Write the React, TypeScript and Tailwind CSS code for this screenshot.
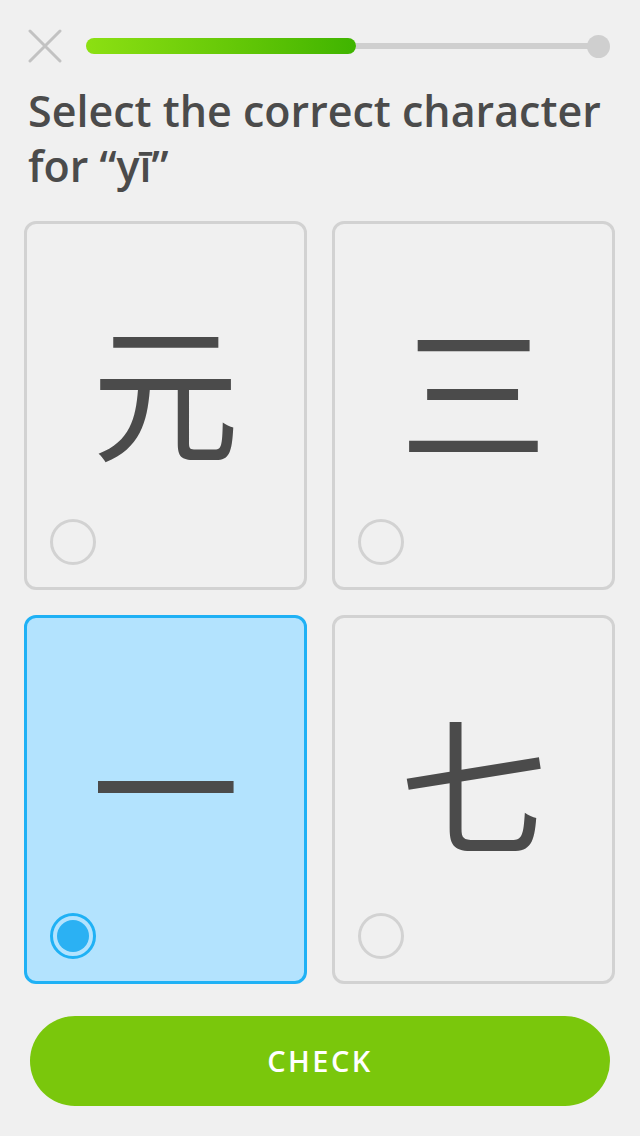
import { useState } from "react";

type Choice = { id: string; glyph: string };

const CHOICES: Choice[] = [
  { id: "yuan", glyph: "元" },
  { id: "san", glyph: "三" },
  { id: "yi", glyph: "一" },
  { id: "qi", glyph: "七" },
];

function CloseIcon() {
  return (
    <svg width="34" height="34" viewBox="0 0 34 34" className="shrink-0">
      <path
        d="M2 2 L32 32 M32 2 L2 32"
        stroke="#c2c2c2"
        strokeWidth="3"
        strokeLinecap="round"
      />
    </svg>
  );
}

function Radio({ checked }: { checked: boolean }) {
  if (checked) {
    return (
      <div className="h-[46px] w-[46px] rounded-full border-[3px] border-[#1fb1f5] p-[4px]">
        <div className="h-full w-full rounded-full bg-[#2bb1f3]" />
      </div>
    );
  }
  return (
    <div className="h-[46px] w-[46px] rounded-full border-[3px] border-[#d2d2d2]" />
  );
}

function ChoiceCard({
  choice,
  selected,
  onSelect,
}: {
  choice: Choice;
  selected: boolean;
  onSelect: () => void;
}) {
  return (
    <button
      type="button"
      onClick={onSelect}
      className={`flex h-[369px] flex-col rounded-[12px] border-[3px] text-left ${
        selected
          ? "border-[#1fb1f5] bg-[#b3e3fe]"
          : "border-[#d2d2d2] bg-[#f0f0f0]"
      }`}
    >
      <div
        className="mt-[92px] flex h-[140px] w-full items-center justify-center text-[148px] leading-none text-[#4b4b4b]"
        style={{ fontFamily: '"Noto Sans CJK SC", sans-serif' }}
      >
        {choice.glyph}
      </div>
      <div className="mt-auto pb-[22px] pl-[23px]">
        <Radio checked={selected} />
      </div>
    </button>
  );
}

export default function App() {
  const [selected, setSelected] = useState("yi");

  return (
    <div
      className="flex min-h-[1136px] w-[640px] flex-col bg-[#f0f0f0]"
      style={{ fontFamily: "'Open Sans', Lato, sans-serif" }}
    >
      <div className="flex items-center pl-[28px] pr-[30px] pt-[29px]">
        <CloseIcon />
        <div className="ml-[24px] flex flex-1 items-center">
          <div className="h-[16px] w-[270px] rounded-full bg-gradient-to-r from-[#8ce012] to-[#3fb400]" />
          <div className="h-[6px] flex-1 bg-[#cfcfcf]" />
          <div className="-ml-[12px] h-[23px] w-[23px] rounded-full bg-[#cfcfcf]" />
        </div>
      </div>

      <h1 className="mt-[20px] pl-[28px] pr-[24px] text-[43px] font-semibold leading-[55px] text-[#4b4b4b]">
        Select the correct character for “yī”
      </h1>

      <div className="mt-[28px] grid grid-cols-2 gap-[25px] pl-[24px] pr-[25px]">
        {CHOICES.map((c) => (
          <ChoiceCard
            key={c.id}
            choice={c}
            selected={selected === c.id}
            onSelect={() => setSelected(c.id)}
          />
        ))}
      </div>

      <div className="px-[30px] pt-[32px]">
        <button
          type="button"
          className="flex h-[90px] w-full items-center justify-center rounded-full bg-[#7ac70c] text-[29px] font-semibold tracking-[2.5px] text-white"
        >
          CHECK
        </button>
      </div>
    </div>
  );
}
